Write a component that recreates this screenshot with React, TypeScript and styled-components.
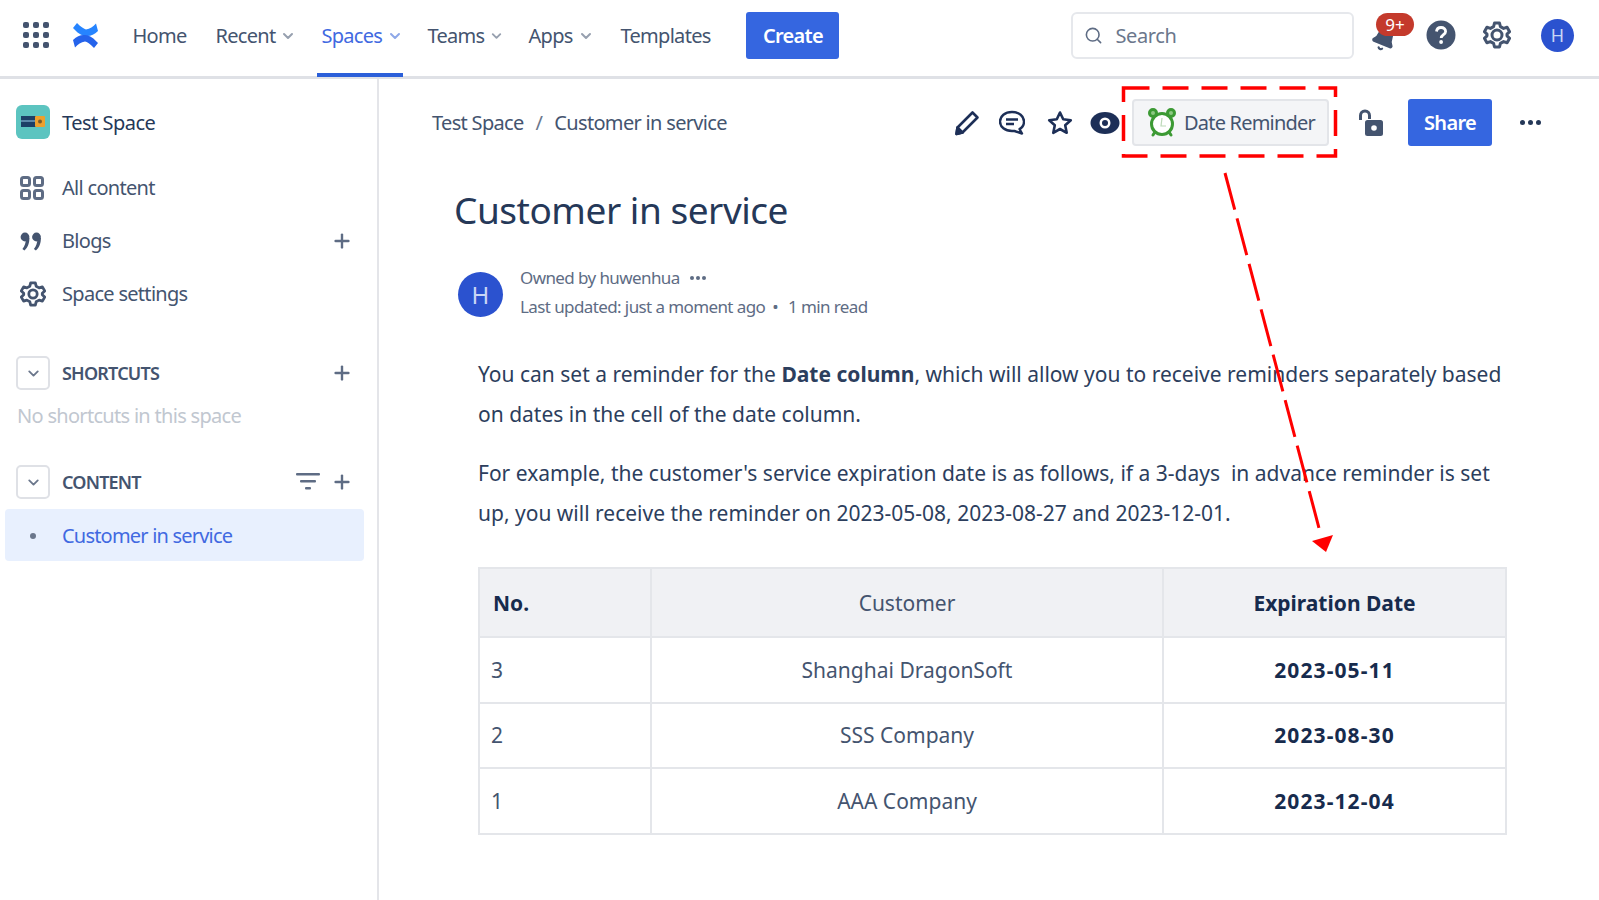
import styled, { createGlobalStyle } from "styled-components";
import { Bell, ChevronDown, Plus, Search as SearchIcon } from "lucide-react";

const GlobalStyle = createGlobalStyle`
  html, body { margin: 0; padding: 0; background: #fff; }
  body { font-family: "Noto Sans", "Open Sans", sans-serif; color: #172b4d; overflow: hidden; }
  * { box-sizing: border-box; }
`;

const navItems = [
  { label: "Home", width: 63 },
  { label: "Recent", width: 86, menu: true },
  { label: "Spaces", width: 86, menu: true, active: true },
  { label: "Teams", width: 81, menu: true },
  { label: "Apps", width: 72, menu: true },
  { label: "Templates", width: 100 },
];

const rows = [
  ["3", "Shanghai DragonSoft", "2023-05-11"],
  ["2", "SSS Company", "2023-08-30"],
  ["1", "AAA Company", "2023-12-04"],
];

const GridIcon = () => (
  <svg width="26" height="26" viewBox="0 0 26 26" fill="#44546f">
    {[3, 13, 23].map((y) =>
      [3, 13, 23].map((x) => <rect key={`${x}-${y}`} x={x - 3} y={y - 3} width="6" height="6" rx="2" />)
    )}
  </svg>
);

const Logo = () => (
  <svg width="27" height="27" viewBox="0 0 27 27" fill="none">
    <path d="M1 6 L5 1 C9 5 12 7 14 7.4 C18 7 21 4.5 24 1.5 L26 9 C22 13 18 14.5 14 14 C9 13.5 5 10.5 1 6Z" fill="#2684ff" />
    <path d="M26 21 L22 26 C18 22 15 20 13 19.6 C9 20 6 22.5 3 25.5 L1 18 C5 14 9 12.5 13 13 C18 13.5 22 16.5 26 21Z" fill="#2563eb" />
  </svg>
);

const HelpIcon = () => (
  <svg width="30" height="30" viewBox="0 0 30 30">
    <circle cx="15" cy="15" r="14.5" fill="#44546f" />
    <path d="M10.5 11.5 C10.8 8.8 12.6 7.5 15 7.5 C17.7 7.5 19.6 9.1 19.6 11.4 C19.6 14.6 15.2 14.6 15.2 18" fill="none" stroke="#fff" strokeWidth="2.8" />
    <circle cx="15.1" cy="22" r="1.9" fill="#fff" />
  </svg>
);

const GearIcon = ({ size = 28, inner = 5 }: { size?: number; inner?: number }) => (
  <svg width={size} height={size} viewBox="0 0 28 28" fill="none" stroke="#44546f" strokeWidth="3" strokeLinejoin="round">
    <path d="M11.5 2 H16.5 L17.4 5.6 L20.6 7.4 L24.1 6.3 L26.6 10.7 L24 13.2 V14.8 L26.6 17.3 L24.1 21.7 L20.6 20.6 L17.4 22.4 L16.5 26 H11.5 L10.6 22.4 L7.4 20.6 L3.9 21.7 L1.4 17.3 L4 14.8 V13.2 L1.4 10.7 L3.9 6.3 L7.4 7.4 L10.6 5.6 Z" />
    <circle cx="14" cy="14" r={inner} />
  </svg>
);

const AllContentIcon = () => (
  <svg width="24" height="24" viewBox="0 0 24 24" fill="none" stroke="#5e6c84" strokeWidth="3">
    <rect x="1.5" y="1.5" width="8" height="8" rx="2" />
    <rect x="14.5" y="1.5" width="8" height="8" rx="2" />
    <rect x="1.5" y="14.5" width="8" height="8" rx="2" />
    <rect x="14.5" y="14.5" width="8" height="8" rx="2" />
  </svg>
);

const QuoteIcon = () => (
  <svg width="22" height="20" viewBox="0 0 22 20" fill="#44546f">
    <circle cx="5" cy="6" r="4.4" />
    <circle cx="16.5" cy="6" r="4.4" />
    <path d="M6 7 H9.4 C9.4 12 8 16.5 4.4 19.5 L2.4 18 C4.8 15 5.8 12 6 7Z" />
    <path d="M17.5 7 H20.9 C20.9 12 19.5 16.5 15.9 19.5 L13.9 18 C16.3 15 17.3 12 17.5 7Z" />
  </svg>
);

const FilterIcon = () => (
  <svg width="24" height="18" viewBox="0 0 24 18" fill="#5e6c84">
    <rect width="24" height="2.6" rx="1" />
    <rect x="4" y="7" width="16" height="2.6" rx="1" />
    <rect x="9" y="14" width="6" height="2.6" rx="1" />
  </svg>
);

const SpaceIcon = () => (
  <svg width="34" height="34" viewBox="0 0 34 34">
    <rect width="34" height="34" rx="6" fill="#5cc4c0" />
    <rect x="5" y="11" width="15" height="11" fill="#1d3f66" />
    <rect x="5" y="15" width="15" height="2" fill="#5b87a8" />
    <rect x="19" y="11" width="10" height="11" rx="1" fill="#eda02d" />
    <circle cx="24" cy="16.5" r="2" fill="#7a5a2a" />
  </svg>
);

const PencilIcon = () => (
  <svg width="26" height="26" viewBox="0 0 26 26" fill="none" stroke="#1d2f57" strokeWidth="2.6" strokeLinejoin="round">
    <path d="M18.5 2.5 L23.5 7.5 L8.5 22.5 L2.5 24 L3.5 17.5 Z" />
    <path d="M3.5 17.5 L8.5 22.5 L2.5 24 Z" fill="#1d2f57" />
  </svg>
);

const CommentIcon = () => (
  <svg width="26" height="26" viewBox="0 0 26 26" fill="none" stroke="#1d2f57" strokeWidth="2.4">
    <path d="M13 2 C20 2 25 6 25 11.5 C25 15 23 17.7 20.5 19 L23 23.5 L15.5 21 L13 21 C6 21 1 17 1 11.5 C1 6 6 2 13 2Z" strokeLinejoin="round" />
    <path d="M7 9.5 H19 M7 14 H15" strokeWidth="2.6" />
  </svg>
);

const StarIcon = () => (
  <svg width="26" height="26" viewBox="0 0 26 26" fill="none" stroke="#1d2f57" strokeWidth="2.6" strokeLinejoin="round">
    <path d="M13 2.5 L16.2 9.3 L23.8 10.2 L18.2 15.3 L19.7 22.8 L13 19 L6.3 22.8 L7.8 15.3 L2.2 10.2 L9.8 9.3 Z" />
  </svg>
);

const EyeIcon = () => (
  <svg width="30" height="24" viewBox="0 0 30 24">
    <ellipse cx="15" cy="12" rx="14.5" ry="11" fill="#1d2f57" />
    <circle cx="15" cy="12" r="5.5" fill="#fff" />
    <circle cx="15" cy="12" r="3" fill="#1d2f57" />
  </svg>
);

const AlarmIcon = () => (
  <svg width="28" height="30" viewBox="0 0 28 30" fill="none">
    <circle cx="14" cy="16" r="10.5" stroke="#3c9a34" strokeWidth="3" fill="#fff" />
    <circle cx="5" cy="5" r="3.5" stroke="#3c9a34" strokeWidth="3" fill="#8dc983" />
    <circle cx="23" cy="5" r="3.5" stroke="#3c9a34" strokeWidth="3" fill="#8dc983" />
    <path d="M5 27 L7 24 M23 27 L21 24" stroke="#3c9a34" strokeWidth="3" strokeLinecap="round" />
    <path d="M14 10 L13 18 L18 18" stroke="#bcd9b8" strokeWidth="1.2" />
  </svg>
);

const LockIcon = () => (
  <svg width="26" height="28" viewBox="0 0 26 28" fill="none">
    <path d="M2.5 11 V6.5 C2.5 3.8 4.3 2 7 2 C9.7 2 11.5 3.8 11.5 6.5 V10" stroke="#44546f" strokeWidth="3" />
    <rect x="7" y="11" width="18" height="16" rx="2.5" fill="#44546f" />
    <circle cx="16" cy="19" r="2.8" fill="#fff" />
  </svg>
);

const Dots = ({ size = 5, gap = 3, color = "#253858" }: { size?: number; gap?: number; color?: string }) => (
  <DotRow $gap={gap}>
    {[0, 1, 2].map((i) => (
      <Dot key={i} $size={size} $color={color} />
    ))}
  </DotRow>
);

// annotation drawn on top of the page
const Annotation = () => (
  <Overlay viewBox="0 0 1599 900" width="1599" height="900" fill="none">
    <rect x="1123.5" y="88" width="212" height="68" stroke="#f00" strokeWidth="3.5" strokeDasharray="26 13" />
    <path d="M1225 173 L1319 528" stroke="#f00" strokeWidth="3" strokeDasharray="38 9" />
    <path d="M1312 541 L1333 535 L1326 552 Z" fill="#f00" />
  </Overlay>
);

export default function App() {
  return (
    <Page>
      <GlobalStyle />
      <TopBar>
        <GridSlot>
          <GridIcon />
        </GridSlot>
        <LogoSlot>
          <Logo />
        </LogoSlot>
        <Nav>
          {navItems.map((item) => (
            <NavItem key={item.label} $active={item.active} $width={item.width}>
              {item.label}
              {item.menu && <ChevronDown size={16} strokeWidth={3} color={item.active ? "#8ea8e8" : "#97a0af"} />}
            </NavItem>
          ))}
        </Nav>
        <PrimaryButton $width={93}>Create</PrimaryButton>
        <SearchBox>
          <SearchIcon size={19} color="#5e6c84" strokeWidth={2} />
          <SearchText>Search</SearchText>
        </SearchBox>
        <BellSlot>
          <TiltedBell>
            <Bell size={26} color="#44546f" fill="#44546f" />
          </TiltedBell>
          <Badge>9+</Badge>
        </BellSlot>
        <HelpSlot>
          <HelpIcon />
        </HelpSlot>
        <GearSlot>
          <GearIcon />
        </GearSlot>
        <Avatar $size={33} $font={18}>H</Avatar>
      </TopBar>
      <Body>
        <Sidebar>
          <SpaceHeader>
            <SpaceIcon />
            <SpaceName>Test Space</SpaceName>
          </SpaceHeader>
          <SideLinks>
            <SideLink>
              <IconSlot><AllContentIcon /></IconSlot>
              All content
            </SideLink>
            <SideLink>
              <IconSlot><QuoteIcon /></IconSlot>
              Blogs
              <SideAction $push><Plus size={22} strokeWidth={2.6} color="#5e6c84" /></SideAction>
            </SideLink>
            <SideLink>
              <IconSlot><GearIcon size={26} inner={4.5} /></IconSlot>
              Space settings
            </SideLink>
          </SideLinks>
          <SectionRow>
            <Toggle><ChevronDown size={17} strokeWidth={2.6} color="#6b778c" /></Toggle>
            <SectionTitle>SHORTCUTS</SectionTitle>
            <SideAction $push><Plus size={22} strokeWidth={2.6} color="#5e6c84" /></SideAction>
          </SectionRow>
          <EmptyNote>No shortcuts in this space</EmptyNote>
          <SectionRow $top={36}>
            <Toggle><ChevronDown size={17} strokeWidth={2.6} color="#6b778c" /></Toggle>
            <SectionTitle>CONTENT</SectionTitle>
            <FilterSlot>
              <FilterIcon />
            </FilterSlot>
            <SideAction><Plus size={22} strokeWidth={2.6} color="#5e6c84" /></SideAction>
          </SectionRow>
          <TreeItem>
            <TreeDot />
            Customer in service
          </TreeItem>
        </Sidebar>
        <Main>
          <Toolbar>
            <Crumbs>
              <span>Test Space</span>
              <CrumbSep>/</CrumbSep>
              <span>Customer in service</span>
            </Crumbs>
            <ToolIcon $width={46}><PencilIcon /></ToolIcon>
            <ToolIcon $width={44}><CommentIcon /></ToolIcon>
            <ToolIcon $width={52}><StarIcon /></ToolIcon>
            <ToolIcon $width={38}><EyeIcon /></ToolIcon>
            <ReminderButton>
              <AlarmIcon />
              Date Reminder
            </ReminderButton>
            <ToolIcon $width={79} $pad={5}><LockIcon /></ToolIcon>
            <PrimaryButton $width={84}>Share</PrimaryButton>
            <MoreSlot><Dots /></MoreSlot>
          </Toolbar>
          <Article>
            <Title>Customer in service</Title>
            <Byline>
              <Avatar $size={45} $font={24}>H</Avatar>
              <BylineText>
                <BylineRow>
                  Owned by huwenhua
                  <BylineDots><Dots size={4} gap={2} color="#5e6c84" /></BylineDots>
                </BylineRow>
                <BylineRow>
                  Last updated: just a moment ago
                  <ReadTime $gap={7}>•</ReadTime>
                  <ReadTime $gap={10}>1 min read</ReadTime>
                </BylineRow>
              </BylineText>
            </Byline>
            <Copy>
              <Para>
                You can set a reminder for the <b>Date column</b>, which will allow you to receive reminders separately based on dates in the cell of the date column.
              </Para>
              <Para>
                For example, the customer's service expiration date is as follows, if a 3-days&nbsp; in advance reminder is set up, you will receive the reminder on 2023-05-08, 2023-08-27 and 2023-12-01.
              </Para>
              <DataTable>
                <colgroup>
                  <col style={{ width: 172 }} />
                  <col style={{ width: 512 }} />
                  <col style={{ width: 343 }} />
                </colgroup>
                <thead>
                  <tr>
                    <HeadCell $bold>No.</HeadCell>
                    <HeadCell $center>Customer</HeadCell>
                    <HeadCell $center $bold>Expiration Date</HeadCell>
                  </tr>
                </thead>
                <tbody>
                  {rows.map((row) => (
                    <tr key={row[0]}>
                      <Cell>{row[0]}</Cell>
                      <Cell $center>{row[1]}</Cell>
                      <DateCell $center $bold>{row[2]}</DateCell>
                    </tr>
                  ))}
                </tbody>
              </DataTable>
            </Copy>
          </Article>
        </Main>
      </Body>
      <Annotation />
    </Page>
  );
}

const Page = styled.div`
  position: relative;
  width: 1599px;
  height: 900px;
  overflow: hidden;
  display: flex;
  flex-direction: column;
`;
const Overlay = styled.svg`
  position: absolute;
  top: 0;
  left: 0;
  pointer-events: none;
`;
const TopBar = styled.header`
  height: 79px;
  flex: none;
  display: flex;
  align-items: center;
  padding: 0 25px 6px 23px;
  border-bottom: 3px solid #dfe1e6;
`;
const GridSlot = styled.div`
  width: 49px;
  display: flex;
`;
const LogoSlot = styled.div`
  width: 47px;
  display: flex;
`;
const Nav = styled.nav`
  display: flex;
  align-self: stretch;
  gap: 20px;
  margin: 0 30px -7px 0;
  padding-left: 10px;
`;
const NavItem = styled.div<{ $active?: boolean; $width: number }>`
  width: ${(p) => p.$width}px;
  padding: 0 0 2px 4px;
  display: flex;
  align-items: center;
  gap: 5px;
  white-space: nowrap;
  font-size: 20px;
  letter-spacing: -0.7px;
  color: ${(p) => (p.$active ? "#4169e1" : "#44546f")};
  border-bottom: 4px solid ${(p) => (p.$active ? "#2b5fd9" : "transparent")};
`;
const PrimaryButton = styled.button<{ $width: number }>`
  width: ${(p) => p.$width}px;
  height: 47px;
  flex: none;
  border: 0;
  border-radius: 3px;
  background: #3566e0;
  color: #fff;
  font-family: inherit;
  font-size: 20px;
  font-weight: 600;
  letter-spacing: -0.7px;
`;
const SearchBox = styled.div`
  width: 284px;
  height: 47px;
  margin-left: 232px;
  padding-left: 11px;
  display: flex;
  align-items: center;
  gap: 12px;
  border: 2px solid #e6e8ec;
  border-radius: 6px;
`;
const SearchText = styled.span`
  font-size: 20px;
  letter-spacing: -0.4px;
  color: #6b778c;
`;
const BellSlot = styled.div`
  position: relative;
  width: 55px;
  margin-left: 17px;
  display: flex;
  justify-content: flex-start;
  padding-top: 8px;
`;
const TiltedBell = styled.span`
  display: flex;
  transform: rotate(22deg);
`;
const Badge = styled.span`
  position: absolute;
  left: 5px;
  top: -5px;
  width: 38px;
  height: 23px;
  border-radius: 12px;
  background: #c43a2c;
  color: #fff;
  font-size: 17px;
  line-height: 23px;
  text-align: center;
`;
const HelpSlot = styled.div`
  width: 58px;
  display: flex;
`;
const GearSlot = styled.div`
  width: 58px;
  display: flex;
`;
const Avatar = styled.div<{ $size: number; $font: number }>`
  width: ${(p) => p.$size}px;
  height: ${(p) => p.$size}px;
  flex: none;
  border-radius: 50%;
  background: #2b52cf;
  color: #c9d6f5;
  font-size: ${(p) => p.$font}px;
  display: flex;
  align-items: center;
  justify-content: center;
`;
const Body = styled.div`
  flex: 1;
  display: flex;
  min-height: 0;
`;
const Sidebar = styled.aside`
  width: 379px;
  flex: none;
  padding: 26px 13px 0 5px;
  border-right: 2px solid #e4e5e9;
`;
const SpaceHeader = styled.div`
  display: flex;
  align-items: center;
  gap: 12px;
  padding-left: 11px;
`;
const SpaceName = styled.div`
  font-size: 20px;
  letter-spacing: -0.5px;
  color: #253858;
`;
const SideLinks = styled.div`
  margin-top: 22px;
  margin-bottom: 36px;
`;
const SideLink = styled.div`
  height: 53px;
  display: flex;
  align-items: center;
  font-size: 20px;
  letter-spacing: -0.7px;
  color: #44546f;
`;
const IconSlot = styled.div`
  width: 57px;
  flex: none;
  padding-left: 15px;
  display: flex;
`;
const SideAction = styled.div<{ $push?: boolean }>`
  margin-left: ${(p) => (p.$push ? "auto" : "11px")};
  margin-right: 11px;
  display: flex;
`;
const SectionRow = styled.div<{ $top?: number }>`
  height: 34px;
  margin-top: ${(p) => p.$top ?? 0}px;
  display: flex;
  align-items: center;
  padding-left: 11px;
`;
const Toggle = styled.div`
  width: 34px;
  height: 34px;
  flex: none;
  margin-right: 12px;
  border: 2px solid #dfe1e6;
  border-radius: 5px;
  display: flex;
  align-items: center;
  justify-content: center;
`;
const SectionTitle = styled.div`
  font-size: 18px;
  font-weight: 600;
  letter-spacing: -0.8px;
  color: #44546f;
`;
const EmptyNote = styled.div`
  margin: 12px 0 0 12px;
  font-size: 20px;
  letter-spacing: -0.7px;
  color: #c1c7d0;
`;
const FilterSlot = styled.div`
  margin-left: auto;
  display: flex;
`;
const TreeItem = styled.div`
  height: 52px;
  margin-top: 10px;
  padding-top: 1px;
  display: flex;
  align-items: center;
  border-radius: 4px;
  background: #e8f0fe;
  font-size: 20px;
  letter-spacing: -0.8px;
  color: #4169e1;
`;
const TreeDot = styled.span`
  width: 6px;
  height: 6px;
  margin: 0 26px 0 25px;
  border-radius: 50%;
  background: #6b778c;
`;
const Main = styled.main`
  flex: 1;
  min-width: 0;
`;
const Toolbar = styled.div`
  height: 47px;
  margin-top: 20px;
  padding-left: 53px;
  display: flex;
  align-items: center;
`;
const Crumbs = styled.div`
  width: 512px;
  display: flex;
  gap: 12px;
  font-size: 20px;
  letter-spacing: -0.68px;
  color: #44546f;
`;
const CrumbSep = styled.span`
  color: #6b778c;
`;
const ToolIcon = styled.div<{ $width: number; $pad?: number }>`
  width: ${(p) => p.$width}px;
  padding-left: ${(p) => p.$pad ?? 0}px;
  flex: none;
  display: flex;
  justify-content: center;
`;
const ReminderButton = styled.button`
  width: 197px;
  height: 47px;
  margin-left: 8px;
  padding: 0 0 0 14px;
  flex: none;
  display: flex;
  align-items: center;
  gap: 8px;
  border: 2px solid #e3e5e9;
  border-radius: 4px;
  background: #f4f5f7;
  font-family: inherit;
  font-size: 20px;
  letter-spacing: -0.8px;
  color: #44546f;
`;
const MoreSlot = styled.div`
  width: 76px;
  display: flex;
  justify-content: center;
`;
const DotRow = styled.span<{ $gap: number }>`
  display: inline-flex;
  gap: ${(p) => p.$gap}px;
`;
const Dot = styled.i<{ $size: number; $color: string }>`
  width: ${(p) => p.$size}px;
  height: ${(p) => p.$size}px;
  border-radius: 50%;
  background: ${(p) => p.$color};
`;
const Article = styled.article`
  padding: 0 0 0 75px;
`;
const Title = styled.h1`
  margin: 35px 0 0;
  font-size: 37px;
  line-height: 58px;
  font-weight: 400;
  letter-spacing: -0.47px;
  color: #253858;
`;
const Byline = styled.div`
  margin: 24px 0 0 4px;
  display: flex;
  align-items: center;
  gap: 17px;
`;
const BylineText = styled.div`
  margin-bottom: 4px;
  font-size: 17px;
  line-height: 29px;
  letter-spacing: -0.6px;
  color: #5e6c84;
`;
const BylineRow = styled.div`
  display: flex;
  align-items: center;
  white-space: pre;
`;
const BylineDots = styled.span`
  margin-left: 10px;
  display: inline-flex;
`;
const ReadTime = styled.span<{ $gap: number }>`
  margin-left: ${(p) => p.$gap}px;
`;
const Copy = styled.div`
  margin: 29px 0 0 24px;
  width: 1027px;
`;
const Para = styled.p`
  margin: 0 0 19px;
  font-size: 21px;
  line-height: 40px;
  color: #2c3e5d;
`;
const DataTable = styled.table`
  width: 1027px;
  margin-top: 34px;
  table-layout: fixed;
  border-collapse: collapse;
`;
const HeadCell = styled.th<{ $center?: boolean; $bold?: boolean }>`
  height: 69px;
  padding: 0 13px;
  border: 2px solid #e4e6ea;
  background: #f0f1f4;
  text-align: ${(p) => (p.$center ? "center" : "left")};
  font-size: 21px;
  font-weight: ${(p) => (p.$bold ? 700 : 400)};
  color: ${(p) => (p.$bold ? "#172b4d" : "#44546f")};
`;
const Cell = styled.td<{ $center?: boolean; $bold?: boolean }>`
  height: 65.5px;
  padding: 0 11px;
  border: 2px solid #e4e6ea;
  text-align: ${(p) => (p.$center ? "center" : "left")};
  font-size: 21px;
  font-weight: ${(p) => (p.$bold ? 700 : 400)};
  color: ${(p) => (p.$bold ? "#172b4d" : "#44546f")};
`;
const DateCell = styled(Cell)`
  letter-spacing: 1.1px;
`;
